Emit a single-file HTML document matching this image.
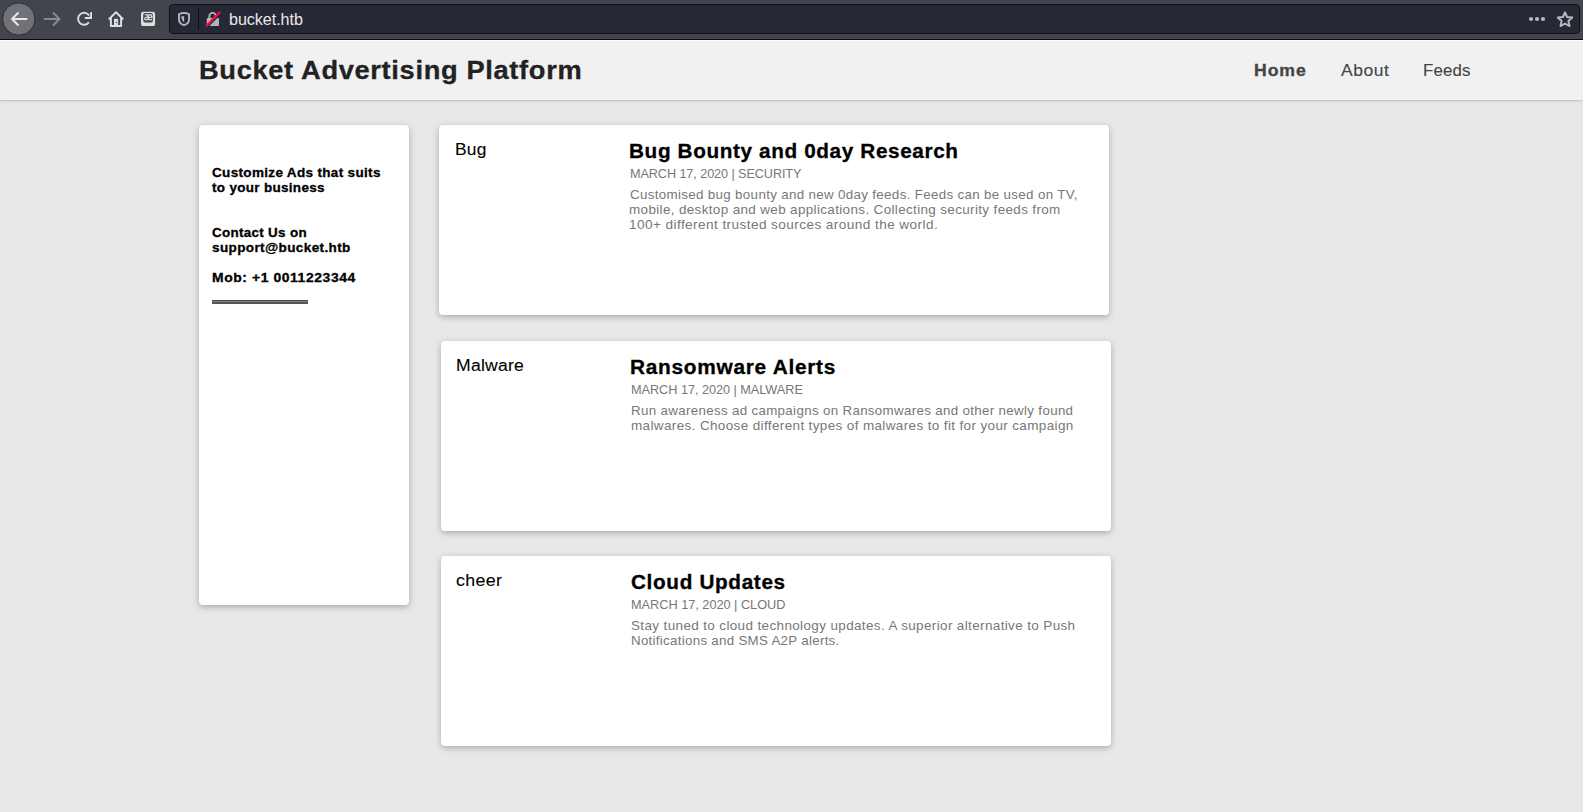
<!DOCTYPE html>
<html><head><meta charset="utf-8">
<style>
html,body{margin:0;padding:0;width:1583px;height:812px;overflow:hidden;background:#e8e8e8;font-family:"Liberation Sans",sans-serif;}
#tb{position:absolute;left:0;top:0;width:1583px;height:40px;background:#42444e;}
#tbline{position:absolute;left:0;top:39px;width:1583px;height:1px;background:#0c0c0f;}
#url{position:absolute;left:169px;top:4px;width:1409px;height:28px;background:#262835;border:1px solid #0e0f14;border-radius:4px;}
#hdr{position:absolute;left:0;top:40px;width:1583px;height:59px;border-top:1px solid #fdfdfd;background:#f1f1f1;border-bottom:1px solid #c9c9c9;box-shadow:0 1px 2px rgba(0,0,0,0.08);}
.card{position:absolute;background:#fff;border-radius:4px;box-shadow:0 2px 5px 0 rgba(0,0,0,0.16),0 2px 10px 0 rgba(0,0,0,0.12);}
.t{position:absolute;white-space:nowrap;transform-origin:0 0;}
#hr{position:absolute;left:212px;top:300px;width:96px;height:4px;background:linear-gradient(#4a4a4a 0 1px,#808080 1px 2px,#545454 2px 4px);}
svg{position:absolute;overflow:visible;}
</style></head><body>
<div id="tb"></div>
<div id="tbline"></div>
<div id="url"></div>
<svg style="left:0;top:0" width="1583" height="39">
  <circle cx="18.8" cy="19" r="16.2" fill="#717278" stroke="#2b2c33" stroke-width="1"/>
  <path d="M26.5 19 H12 M18 13 L12 19 L18 25" fill="none" stroke="#e6e6e4" stroke-width="2" stroke-linecap="round" stroke-linejoin="round"/>
  <path d="M44.5 19 H59.5 M53.5 13 L59.5 19 L53.5 25" fill="none" stroke="#88898e" stroke-width="2" stroke-linecap="round" stroke-linejoin="round"/>
  <path d="M89.2 15.6 A6 6 0 1 0 88.9 22.4" fill="none" stroke="#dededc" stroke-width="1.9"/>
  <path d="M84.8 18.9 H92 V12 H90.2 V16.2 L89 17.1 H84.8 Z" fill="#dededc"/>
  <path d="M108.8 19.4 L116 12.2 L123.2 19.4 M110.9 17.6 V26 H121.1 V17.6" fill="none" stroke="#dededc" stroke-width="2" stroke-linejoin="round"/>
  <rect x="114" y="18.8" width="4.1" height="7.2" fill="#dededc"/>
  <circle cx="116.4" cy="22.4" r="0.7" fill="#42444e"/>
  <rect x="141" y="11.7" width="14.1" height="14.4" rx="2.2" fill="#dededc"/>
  <rect x="143.2" y="13" width="9.7" height="9.6" rx="2" fill="#42444e"/>
  <path d="M144.9 15.1 Q146.2 14.4 147.3 14.6 Q148.2 14.9 148.2 16.2 V19.8 M148.2 17.3 Q146.5 17.1 145.4 17.5 Q144.4 18.1 144.7 19 Q145.1 19.9 146.3 19.8 Q147.6 19.6 148.2 18.7" stroke="#dcdcdc" stroke-width="1.25" fill="none"/>
  <path d="M148.2 17.3 H151.9 Q151.9 14.5 150.1 14.5 Q148.2 14.5 148.2 17.3 Q148.2 19.8 150.3 19.8 Q151.3 19.8 151.9 19.3" stroke="#dcdcdc" stroke-width="1.25" fill="none"/>
  <path d="M184 13 C182 13 180 13.6 179 14.2 V19.5 C179 22.3 181.5 24.4 184 25.2 C186.5 24.4 189 22.3 189 19.5 V14.2 C188 13.6 186 13 184 13 Z" fill="none" stroke="#b4b5ba" stroke-width="1.9"/>
  <path d="M181.2 16.6 L184.1 16.1 V22.2 C182.6 21.2 181.4 19.5 181.2 16.6 Z" fill="#b4b5ba"/>
  <rect x="198" y="8" width="1" height="22" fill="#0e0f14"/>
  <path d="M209.4 18.5 V16.1 A3.2 3.2 0 0 1 215.8 16.1 V18.5" fill="none" stroke="#b4b5ba" stroke-width="1.9"/>
  <rect x="206.8" y="18" width="12.2" height="8" rx="1.2" fill="#b4b5ba"/>
  <path d="M207.6 26.6 L221 13.1" stroke="#262835" stroke-width="1.6"/>
  <path d="M206.7 25.6 L219.6 12.5" stroke="#ff0a3e" stroke-width="2.2" stroke-linecap="round"/>
  <circle cx="1531" cy="19" r="2.1" fill="#b9babf"/>
  <circle cx="1537" cy="19" r="2.1" fill="#b9babf"/>
  <circle cx="1543" cy="19" r="2.1" fill="#b9babf"/>
  <path d="M1565.00 12.30 L1567.12 16.99 L1572.23 17.55 L1568.42 21.01 L1569.47 26.05 L1565.00 23.50 L1560.53 26.05 L1561.58 21.01 L1557.77 17.55 L1562.88 16.99 Z" fill="none" stroke="#b8b9be" stroke-width="2" stroke-linejoin="round"/>
</svg>
<div id="hdr"></div>
<div class="card" style="left:199px;top:125px;width:210px;height:480px;"></div>
<div class="card" style="left:439px;top:125px;width:670px;height:190px;"></div>
<div class="card" style="left:441px;top:341px;width:670px;height:190px;"></div>
<div class="card" style="left:441px;top:556px;width:670px;height:190px;"></div>
<div id="hr"></div>
<div class="t" id="t0" style="left:199.27px;top:53.99px;font-size:26.0px;line-height:32px;letter-spacing:0.620px;transform:scaleX(1.0490);font-weight:bold;-webkit-text-stroke:0.3px #222;color:#222;">Bucket Advertising Platform</div>
<div class="t" id="t1" style="left:1254.15px;top:59.75px;font-size:16.6px;line-height:21px;letter-spacing:0.877px;transform:scaleX(1.0628);font-weight:bold;-webkit-text-stroke:0.3px #444;color:#444;">Home</div>
<div class="t" id="t2" style="left:1340.78px;top:59.75px;font-size:16.6px;line-height:21px;letter-spacing:0.535px;transform:scaleX(1.0523);-webkit-text-stroke:0.1px #444;color:#444;">About</div>
<div class="t" id="t3" style="left:1422.93px;top:59.75px;font-size:16.6px;line-height:21px;letter-spacing:0.158px;transform:scaleX(1.0146);-webkit-text-stroke:0.1px #444;color:#444;">Feeds</div>
<div class="t" id="t4" style="left:211.65px;top:164.53px;font-size:12.9px;line-height:16px;letter-spacing:0.309px;transform:scaleX(1.0485);font-weight:bold;-webkit-text-stroke:0.3px #000;color:#000;">Customize Ads that suits</div>
<div class="t" id="t5" style="left:212.01px;top:179.53px;font-size:12.9px;line-height:16px;letter-spacing:0.299px;transform:scaleX(1.0455);font-weight:bold;-webkit-text-stroke:0.3px #000;color:#000;">to your business</div>
<div class="t" id="t6" style="left:211.78px;top:224.53px;font-size:12.9px;line-height:16px;letter-spacing:0.289px;transform:scaleX(1.0415);font-weight:bold;-webkit-text-stroke:0.3px #000;color:#000;">Contact Us on</div>
<div class="t" id="t7" style="left:212.15px;top:239.53px;font-size:12.9px;line-height:16px;letter-spacing:0.354px;transform:scaleX(1.0503);font-weight:bold;-webkit-text-stroke:0.3px #000;color:#000;">support@bucket.htb</div>
<div class="t" id="t8" style="left:211.54px;top:269.53px;font-size:12.9px;line-height:16px;letter-spacing:0.536px;transform:scaleX(1.0792);font-weight:bold;-webkit-text-stroke:0.3px #000;color:#000;">Mob: +1 0011223344</div>
<div class="t" id="t9" style="left:454.62px;top:138.04px;font-size:17.2px;line-height:22px;letter-spacing:0.174px;transform:scaleX(1.0126);-webkit-text-stroke:0.1px #000;color:#000;">Bug</div>
<div class="t" id="t10" style="left:629.28px;top:139.21px;font-size:19.6px;line-height:24px;letter-spacing:0.590px;transform:scaleX(1.0579);font-weight:bold;-webkit-text-stroke:0.3px #000;color:#000;">Bug Bounty and 0day Research</div>
<div class="t" id="t11" style="left:630.02px;top:165.56px;font-size:12.8px;line-height:16px;letter-spacing:-0.083px;transform:scaleX(0.9886);-webkit-text-stroke:0px #777;color:#777;">MARCH 17, 2020 | SECURITY</div>
<div class="t" id="t12" style="left:629.61px;top:186.60px;font-size:12.7px;line-height:16px;letter-spacing:0.311px;transform:scaleX(1.0525);-webkit-text-stroke:0px #777;color:#777;">Customised bug bounty and new 0day feeds. Feeds can be used on TV,</div>
<div class="t" id="t13" style="left:629.43px;top:201.60px;font-size:12.7px;line-height:16px;letter-spacing:0.330px;transform:scaleX(1.0611);-webkit-text-stroke:0px #777;color:#777;">mobile, desktop and web applications. Collecting security feeds from</div>
<div class="t" id="t14" style="left:629.37px;top:216.60px;font-size:12.7px;line-height:16px;letter-spacing:0.388px;transform:scaleX(1.0727);-webkit-text-stroke:0px #777;color:#777;">100+ different trusted sources around the world.</div>
<div class="t" id="t15" style="left:456.02px;top:354.04px;font-size:17.2px;line-height:22px;letter-spacing:0.232px;transform:scaleX(1.0227);-webkit-text-stroke:0.1px #000;color:#000;">Malware</div>
<div class="t" id="t16" style="left:630.47px;top:355.21px;font-size:19.6px;line-height:24px;letter-spacing:0.673px;transform:scaleX(1.0639);font-weight:bold;-webkit-text-stroke:0.3px #000;color:#000;">Ransomware Alerts</div>
<div class="t" id="t17" style="left:631.23px;top:381.56px;font-size:12.8px;line-height:16px;letter-spacing:-0.046px;transform:scaleX(0.9938);-webkit-text-stroke:0px #777;color:#777;">MARCH 17, 2020 | MALWARE</div>
<div class="t" id="t18" style="left:631.13px;top:402.60px;font-size:12.7px;line-height:16px;letter-spacing:0.313px;transform:scaleX(1.0507);-webkit-text-stroke:0px #777;color:#777;">Run awareness ad campaigns on Ransomwares and other newly found</div>
<div class="t" id="t19" style="left:630.63px;top:417.60px;font-size:12.7px;line-height:16px;letter-spacing:0.344px;transform:scaleX(1.0634);-webkit-text-stroke:0px #777;color:#777;">malwares. Choose different types of malwares to fit for your campaign</div>
<div class="t" id="t20" style="left:456.09px;top:569.04px;font-size:17.2px;line-height:22px;letter-spacing:0.360px;transform:scaleX(1.0353);-webkit-text-stroke:0.1px #000;color:#000;">cheer</div>
<div class="t" id="t21" style="left:631.25px;top:570.21px;font-size:19.6px;line-height:24px;letter-spacing:0.619px;transform:scaleX(1.0578);font-weight:bold;-webkit-text-stroke:0.3px #000;color:#000;">Cloud Updates</div>
<div class="t" id="t22" style="left:631.23px;top:596.56px;font-size:12.8px;line-height:16px;letter-spacing:-0.025px;transform:scaleX(0.9965);-webkit-text-stroke:0px #777;color:#777;">MARCH 17, 2020 | CLOUD</div>
<div class="t" id="t23" style="left:631.38px;top:617.60px;font-size:12.7px;line-height:16px;letter-spacing:0.340px;transform:scaleX(1.0631);-webkit-text-stroke:0px #777;color:#777;">Stay tuned to cloud technology updates. A superior alternative to Push</div>
<div class="t" id="t24" style="left:631.14px;top:632.60px;font-size:12.7px;line-height:16px;letter-spacing:0.279px;transform:scaleX(1.0498);-webkit-text-stroke:0px #777;color:#777;">Notifications and SMS A2P alerts.</div>
<div class="t" id="t25" style="left:228.53px;top:9.39px;font-size:16.2px;line-height:20px;letter-spacing:-0.048px;transform:scaleX(0.9942);-webkit-text-stroke:0px #e9e9eb;color:#e9e9eb;">bucket.htb</div>
</body></html>
